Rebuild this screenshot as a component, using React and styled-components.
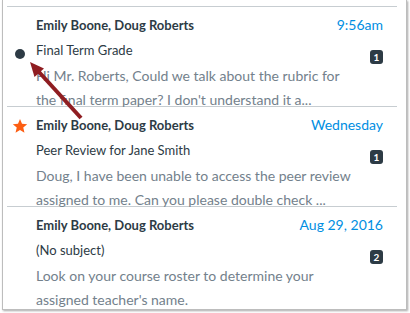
import React from "react";
import styled, { createGlobalStyle } from "styled-components";

const text_dark = "#2d3b45";
const text_gray = "#73818c";
const link_blue = "#008ee2";
const rule_color = "#c7cdd1";

const GlobalStyle = createGlobalStyle`
  html, body {
    margin: 0;
    padding: 0;
    background: #ffffff;
  }
  body {
    font-family: Lato, "Open Sans", "Liberation Sans", sans-serif;
    -webkit-font-smoothing: antialiased;
  }
`;

const PAGE = styled.div`
  position: relative;
  width: 410px;
  height: 313px;
  overflow: hidden;
`;

const FRAME = styled.section`
  margin-left: 2px;
  width: 405px;
  box-sizing: border-box;
  border: 1px solid #bdbdbd;
  border-top: none;
  box-shadow: 1px 1px 2px rgba(0, 0, 0, 0.35);
  padding: 6px 9px 3px 4px;
  background: #ffffff;
`;

const ITEM = styled.article`
  display: grid;
  grid-template-columns: 29px 1fr;
  height: 100px;
  box-sizing: border-box;
  border-top: 1px solid ${rule_color};
  padding-right: 14px;
`;

const ICON_CELL = styled.div`
  position: relative;
`;

const UNREAD_DOT = styled.span`
  display: block;
  width: 10px;
  height: 10px;
  border-radius: 50%;
  background: ${text_dark};
  margin: 42px 0 0 8px;
`;

const STAR = styled.svg`
  display: block;
  width: 16px;
  height: 16px;
  margin: 11px 0 0 5px;
`;

const BODY = styled.div`
  display: flex;
  flex-direction: column;
  min-width: 0;
  padding-top: 8px;
`;

const HEAD_ROW = styled.div`
  display: flex;
  justify-content: space-between;
  align-items: baseline;
  line-height: 20px;
`;

const NAMES = styled.span`
  font-size: 13px;
  font-weight: 700;
  color: ${text_dark};
`;

const DATE = styled.span`
  font-size: 14px;
  color: ${link_blue};
`;

const SUBJECT_ROW = styled.div`
  display: flex;
  justify-content: space-between;
  align-items: flex-start;
  margin-top: 5px;
  line-height: 20px;
`;

const SUBJECT = styled.span`
  font-size: 13px;
  color: ${text_dark};
`;

const BADGE = styled.span`
  display: inline-flex;
  align-items: center;
  justify-content: center;
  width: 13px;
  height: 14px;
  margin-top: 10px;
  border-radius: 3px;
  background: ${text_dark};
  color: #ffffff;
  font-size: 10px;
  font-weight: 700;
  line-height: 1;
`;

const PREVIEW = styled.p`
  margin: 0;
  padding-right: 24px;
  font-size: 14px;
  line-height: 24px;
  color: ${text_gray};
`;

const ARROW = styled.svg`
  position: absolute;
  left: 0;
  top: 0;
  pointer-events: none;
`;

const messages = [
  {
    names: "Emily Boone, Doug Roberts",
    date: "9:56am",
    subject: "Final Term Grade",
    count: 1,
    marker: "unread",
    preview:
      "Hi Mr. Roberts, Could we talk about the rubric for the final term paper? I don't understand it a..."
  },
  {
    names: "Emily Boone, Doug Roberts",
    date: "Wednesday",
    subject: "Peer Review for Jane Smith",
    count: 1,
    marker: "starred",
    preview:
      "Doug, I have been unable to access the peer review assigned to me. Can you please double check ..."
  },
  {
    names: "Emily Boone, Doug Roberts",
    date: "Aug 29, 2016",
    subject: "(No subject)",
    count: 2,
    marker: null,
    preview: "Look on your course roster to determine your assigned teacher's name."
  }
];

const StarIcon = () => (
  <STAR viewBox="0 0 24 24">
    <polygon
      fill="#fc5e13"
      points="12,1.5 15,8.6 22.8,9.2 16.9,14.3 18.7,22 12,17.9 5.3,22 7.1,14.3 1.2,9.2 9,8.6"
    />
  </STAR>
);

const MessageItem = ({ message }) => (
  <ITEM>
    <ICON_CELL>
      {message.marker === "unread" && <UNREAD_DOT />}
      {message.marker === "starred" && <StarIcon />}
    </ICON_CELL>
    <BODY>
      <HEAD_ROW>
        <NAMES>{message.names}</NAMES>
        <DATE>{message.date}</DATE>
      </HEAD_ROW>
      <SUBJECT_ROW>
        <SUBJECT>{message.subject}</SUBJECT>
        <BADGE>{message.count}</BADGE>
      </SUBJECT_ROW>
      <PREVIEW>{message.preview}</PREVIEW>
    </BODY>
  </ITEM>
);

export default function App() {
  return (
    <>
      <GlobalStyle />
      <PAGE>
        <FRAME>
          {messages.map((m, i) => (
            <MessageItem key={i} message={m} />
          ))}
        </FRAME>
        {/* callout arrow pointing at the unread dot */}
        <ARROW width="410" height="313" viewBox="0 0 410 313">
          <line x1="81" y1="118" x2="39" y2="72" stroke="#8f1d21" strokeWidth="4" />
          <polygon points="30,62 44,68.5 34.5,77" fill="#8f1d21" />
        </ARROW>
      </PAGE>
    </>
  );
}
